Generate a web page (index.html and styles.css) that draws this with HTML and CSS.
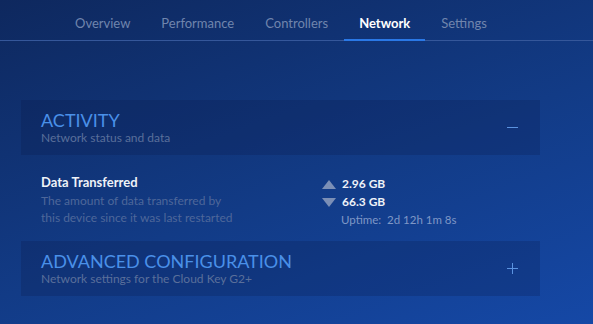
FILE: index.html
```html
<!DOCTYPE html>
<html lang="en">
<head>
    <meta charset="UTF-8">
    <meta name="viewport" content="width=device-width, initial-scale=1.0">
    <title>Network</title>
    <link rel="stylesheet" href="styles.css">
</head>
<body>

<nav class="tabs">
    <a class="tab">Overview</a>
    <a class="tab">Performance</a>
    <a class="tab">Controllers</a>
    <a class="tab active">Network</a>
    <a class="tab">Settings</a>
</nav>

<main class="content">
    <section class="panel">
        <div class="panel-head">
            <div>
                <h2 class="panel-title">ACTIVITY</h2>
                <p class="panel-sub">Network status and data</p>
            </div>
            <span class="toggle minus"></span>
        </div>
    </section>

    <div class="row">
        <div class="row-info">
            <h3 class="row-title">Data Transferred</h3>
            <p class="row-desc">The amount of data transferred by<br>this device since it was last restarted</p>
        </div>
        <div class="row-value">
            <div class="stat"><span class="arrow up"></span>2.96 GB</div>
            <div class="stat"><span class="arrow down"></span>66.3 GB</div>
            <div class="uptime">Uptime:&nbsp; 2d 12h 1m 8s</div>
        </div>
    </div>

    <section class="panel">
        <div class="panel-head">
            <div>
                <h2 class="panel-title">ADVANCED CONFIGURATION</h2>
                <p class="panel-sub">Network settings for the Cloud Key G2+</p>
            </div>
            <span class="toggle plus"></span>
        </div>
    </section>
</main>

</body>
</html>
```

FILE: styles.css
```css
html, body {
    height: 100%;
}

body {
    margin: 0;
    font-family: Lato, "Open Sans", sans-serif;
    background: linear-gradient(160deg, #0e285e 0%, #123b86 55%, #1548a6 100%);
    overflow: hidden;
}

.tabs {
    display: flex;
    gap: 1px;
    height: 40px;
    padding-left: 60px;
    border-bottom: 1px solid #35579a;
}

.tab {
    display: flex;
    align-items: center;
    padding: 7px 15px 0;
    font-size: 13px;
    color: #7085ad;
    border-bottom: 2px solid transparent;
    margin-bottom: -1px;
}

.tab.active {
    color: #fff;
    font-weight: 700;
    border-bottom-color: #2a78e6;
}

.content {
    padding: 59px 53px 0 21px;
}

.panel {
    background: rgba(10, 25, 70, 0.22);
    height: 55px;
}

.panel-head {
    display: flex;
    justify-content: space-between;
    align-items: center;
    height: 100%;
    padding: 0 20px;
}

.panel-title {
    margin: 0;
    font-size: 18px;
    font-weight: 400;
    color: #4a90e8;
    line-height: 20px;
}

.panel-sub {
    margin: 1px 0 0;
    font-size: 12px;
    color: #5a6f9a;
    line-height: 14px;
}

.toggle {
    position: relative;
    width: 11px;
    height: 11px;
    margin-right: 2px;
}

.toggle::before,
.toggle::after {
    content: "";
    position: absolute;
    background: #5b93e0;
}

.toggle::before {
    left: 0;
    right: 0;
    top: 5px;
    height: 1px;
}

.plus::after {
    top: 0;
    bottom: 0;
    left: 5px;
    width: 1px;
}

.minus::after {
    display: none;
}

.row {
    display: flex;
    box-sizing: border-box;
    height: 86px;
    padding: 19px 20px 0;
}

.row-info {
    width: 281px;
}

.row-title {
    margin: 0;
    font-size: 13px;
    font-weight: 700;
    color: #eef2f8;
    line-height: 17px;
}

.row-desc {
    margin: 1px 0 0;
    font-size: 12px;
    color: #4e679a;
    line-height: 17px;
}

.row-value {
    padding-top: 1px;
}

.stat {
    display: flex;
    align-items: center;
    font-size: 12px;
    font-weight: 700;
    color: #eef2f8;
    line-height: 18px;
}

.arrow {
    width: 0;
    height: 0;
    border-left: 7px solid transparent;
    border-right: 7px solid transparent;
    margin-right: 6px;
}

.arrow.up {
    border-bottom: 9px solid #7b8fb6;
}

.arrow.down {
    border-top: 9px solid #7b8fb6;
}

.uptime {
    margin: 1px 0 0 19px;
    font-size: 11.5px;
    color: #7f97c6;
    line-height: 16px;
}
```
